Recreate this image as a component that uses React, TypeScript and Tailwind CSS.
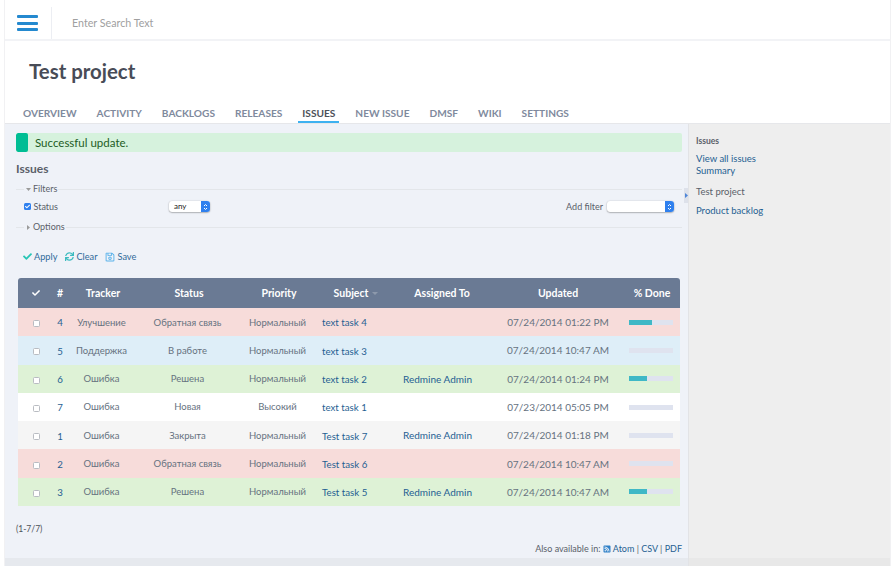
import { FaCheck, FaRegSave, FaRssSquare, FaSync } from 'react-icons/fa';

const rows = [
  { id: 4, tracker: 'Улучшение', status: 'Обратная связь', priority: 'Нормальный', subject: 'text task 4', who: '', updated: '07/24/2014 01:22 PM', done: 'w-[23px]', bg: 'bg-[#f7dcda]' },
  { id: 5, tracker: 'Поддержка', status: 'В работе', priority: 'Нормальный', subject: 'text task 3', who: '', updated: '07/24/2014 10:47 AM', done: 'w-0', bg: 'bg-[#deeef8]' },
  { id: 6, tracker: 'Ошибка', status: 'Решена', priority: 'Нормальный', subject: 'text task 2', who: 'Redmine Admin', updated: '07/24/2014 01:24 PM', done: 'w-[18px]', bg: 'bg-[#def2d6]' },
  { id: 7, tracker: 'Ошибка', status: 'Новая', priority: 'Высокий', subject: 'text task 1', who: '', updated: '07/23/2014 05:05 PM', done: 'w-0', bg: 'bg-white' },
  { id: 1, tracker: 'Ошибка', status: 'Закрыта', priority: 'Нормальный', subject: 'Test task 7', who: 'Redmine Admin', updated: '07/24/2014 01:18 PM', done: 'w-0', bg: 'bg-[#f5f5f5]' },
  { id: 2, tracker: 'Ошибка', status: 'Обратная связь', priority: 'Нормальный', subject: 'Test task 6', who: '', updated: '07/24/2014 10:47 AM', done: 'w-0', bg: 'bg-[#f7dcda]' },
  { id: 3, tracker: 'Ошибка', status: 'Решена', priority: 'Нормальный', subject: 'Test task 5', who: 'Redmine Admin', updated: '07/24/2014 10:47 AM', done: 'w-[18px]', bg: 'bg-[#def2d6]' },
];

const tabs = ['Overview', 'Activity', 'Backlogs', 'Releases', 'Issues', 'New issue', 'DMSF', 'Wiki', 'Settings'];

function MacSelect({ label, className }: { label?: string; className: string }) {
  return (
    <div className={`flex h-[11px] rounded-[3px] bg-white shadow-[0_0.5px_1.5px_rgba(0,0,0,0.45)] overflow-hidden ${className}`}>
      <span className="flex-1 pl-[5px] text-[8px] leading-[11px] text-[#222]">{label}</span>
      <span className="w-[9px] bg-[#2f80ee] flex items-center justify-center">
        <svg width="5" height="8" viewBox="0 0 5 8" fill="none" stroke="#fff" strokeWidth="1">
          <path d="M1 3 L2.5 1.5 L4 3 M1 5 L2.5 6.5 L4 5" />
        </svg>
      </span>
    </div>
  );
}

function FieldLine({ open, label }: { open: boolean; label: string }) {
  return (
    <div className="flex items-center h-[12px] text-[9px] text-[#5a5f69]">
      <span className="w-[8px] h-px bg-[#e3e6ea]" />
      <span className="w-[8px] flex justify-center text-[#9a9a9a]">
        <svg width="5" height="5" viewBox="0 0 5 5" fill="currentColor">
          <path d={open ? 'M0 1 H5 L2.5 4 Z' : 'M1 0 V5 L4 2.5 Z'} />
        </svg>
      </span>
      <span className="px-[1px]">{label}</span>
      <span className="flex-1 h-px bg-[#e3e6ea]" />
    </div>
  );
}

export default function App() {
  return (
    <div className="w-[895px] h-[566px] overflow-hidden bg-white px-[4px] font-['Lato','Liberation_Sans',sans-serif] text-[#66727f]">
      <div className="h-full flex flex-col border-x border-[#f1f1f3]">
        <header className="h-[41px] pt-[7px] flex shrink-0 border-b-2 border-[#f2f3f6]">
          <div className="w-[47px] flex flex-col justify-center gap-[3.5px] pl-[12px] pr-[13px] border-r border-[#eceef3]">
            <span className="h-[3px] bg-[#2489cf] rounded-[1px]" />
            <span className="h-[3px] bg-[#2489cf] rounded-[1px]" />
            <span className="h-[3px] bg-[#2489cf] rounded-[1px]" />
          </div>
          <div className="pl-[20px] flex items-center text-[10.7px] text-[#a0a0a0]">Enter Search Text</div>
        </header>

        <div className="h-[82px] shrink-0 flex flex-col">
          <h1 className="pl-[24px] pt-[18px] h-[59px] text-[20.4px] leading-[25px] font-bold text-[#484c57]">Test project</h1>
          <nav className="flex pl-[18px] gap-[20px] text-[10.15px] font-bold uppercase text-[#7f8a9d]">
            {tabs.map((t) => (
              <span
                key={t}
                className={t === 'Issues' ? 'h-[23px] leading-[14px] pt-[5.5px] text-[#4d5159] border-b-2 border-[#3db1f0] -mx-[4px] px-[4px]' : 'h-[23px] leading-[14px] pt-[5.5px]'}
              >
                {t}
              </span>
            ))}
          </nav>
        </div>

        <div className="flex-1 min-h-0 flex border-t border-[#e6e7ea]">
          <main className="relative w-[683px] shrink-0 bg-[#eff2f8] pl-[11px] pr-[6px] pt-[9px]">
            <div className="flex h-[19px] rounded-[2px] bg-[#d6f2dd] overflow-hidden">
              <span className="w-[12px] bg-[#00bd94] rounded-[2px]" />
              <span className="pl-[7px] text-[11.5px] leading-[19px] text-[#1d5c24]">Successful update.</span>
            </div>
            <h2 className="mt-[9px] h-[18px] text-[12px] leading-[16px] font-bold text-[#5a5f69]">Issues</h2>
            <div className="mt-[4px]"><FieldLine open label="Filters" /></div>
            <div className="h-[23px] flex items-center pl-[8px] text-[9px] text-[#5a5f69]">
              <span className="w-[7px] h-[7px] rounded-[1.5px] bg-[#2f80ee] flex items-center justify-center">
                <FaCheck className="text-white text-[5px]" />
              </span>
              <span className="pl-[2.5px] w-[138px]">Status</span>
              <MacSelect label="any" className="w-[41px]" />
              <span className="ml-auto pr-[4px]">Add filter</span>
              <MacSelect className="w-[67px] mr-[8px]" />
            </div>
            <div className="mt-[3px]"><FieldLine open={false} label="Options" /></div>
            <div className="mt-[12px] h-[24px] pl-[7px] flex items-center gap-[8px] text-[9.2px] text-[#2f6a9a]">
              <span className="flex items-center gap-[2px]"><FaCheck className="text-[#27c5b5] text-[9px]" />Apply</span>
              <span className="flex items-center gap-[2px]"><FaSync className="text-[#3cbcc0] text-[9px]" />Clear</span>
              <span className="flex items-center gap-[2px]"><FaRegSave className="text-[#5ab2ea] text-[10px]" />Save</span>
            </div>

            <table className="mt-[9px] ml-[2px] w-[662px] table-fixed border-collapse text-[9.5px] text-center">
              <colgroup>
                <col className="w-[36px]" />
                <col className="w-[12px]" />
                <col className="w-[74px]" />
                <col className="w-[98px]" />
                <col className="w-[82px]" />
                <col className="w-[72px]" />
                <col className="w-[100px]" />
                <col className="w-[132px]" />
                <col className="w-[56px]" />
              </colgroup>
              <thead>
                <tr className="h-[30px] bg-[#6a7a94] text-white text-[10.5px] font-bold">
                  <th className="rounded-tl-[3px] font-bold pt-[1px]"><FaCheck className="inline text-[8px] -mt-[2px]" /></th>
                  <th className="font-bold pt-[1px]">#</th>
                  <th className="font-bold pt-[1px]">Tracker</th>
                  <th className="font-bold pt-[1px]">Status</th>
                  <th className="font-bold pt-[1px]">Priority</th>
                  <th className="font-bold pt-[1px]">
                    Subject
                    <svg className="inline ml-[4px] mb-[1px]" width="6" height="3" viewBox="0 0 6 3" fill="#8d99ac"><path d="M0 0 H6 L3 3 Z" /></svg>
                  </th>
                  <th className="font-bold pt-[1px]">Assigned To</th>
                  <th className="font-bold pt-[1px]">Updated</th>
                  <th className="rounded-tr-[3px] font-bold pt-[1px]">% Done</th>
                </tr>
              </thead>
              <tbody>
                {rows.map((r) => (
                  <tr key={r.id} className={`h-[28.3px] ${r.bg}`}>
                    <td className="pt-[2px]">
                      <span className="inline-block align-middle w-[7px] h-[7px] rounded-[1.5px] bg-white border border-[#b9bcc2]" />
                    </td>
                    <td className="pt-[1px] text-[#1f5f92] text-[9.7px]">{r.id}</td>
                    <td className="pt-[1px] pr-[3px]">{r.tracker}</td>
                    <td className="pt-[1px] pr-[3px]">{r.status}</td>
                    <td className="pt-[1px] pr-[3px]">{r.priority}</td>
                    <td className="pt-[1px] text-left pl-[2px] text-[#1f5f92] text-[9.7px]">{r.subject}</td>
                    <td className="pt-[1px] text-left pl-[11px] text-[#1f5f92] text-[10px]">{r.who}</td>
                    <td className="pt-[1px] text-[10px]">{r.updated}</td>
                    <td className="pl-[5px] pr-[7px]">
                      <div className="h-[5px] bg-[#dfe3ef]">
                        <div className={`h-full bg-[#3fb8c6] ${r.done}`} />
                      </div>
                    </td>
                  </tr>
                ))}
              </tbody>
            </table>

            <p className="mt-[17px] text-[8.5px] leading-[12px] text-[#4d5159]">(1-7/7)</p>
            <p className="mt-[8px] text-right text-[9px] leading-[12px] text-[#5a5f69]">
              Also available in: <FaRssSquare className="inline text-[8px] text-[#2f80c8] -mt-[1px]" />{' '}
              <span className="text-[#1f5f92]">Atom</span> | <span className="text-[#1f5f92]">CSV</span> | <span className="text-[#1f5f92]">PDF</span>
            </p>

            <span className="absolute -right-[1px] top-[64px] w-[5px] h-[15px] bg-[#dde1ea] flex items-center justify-center">
              <svg width="3" height="5" viewBox="0 0 3 5" fill="#4f86d8"><path d="M0 0 L3 2.5 L0 5 Z" /></svg>
            </span>
            <div className="absolute inset-x-0 bottom-0 h-[8px] bg-[#e6e9ee]" />
          </main>

          <aside className="relative flex-1 bg-[#eeeeee] border-l border-[#e2e3e6] pl-[7px] pt-[11px] text-[9.5px] text-[#1f5f92]">
            <h3 className="text-[8.5px] leading-[12px] font-bold text-[#5a5f69]">Issues</h3>
            <p className="mt-[6px] leading-[12px]">View all issues</p>
            <p className="leading-[12px]">Summary</p>
            <p className="mt-[9px] leading-[12px] text-[#5a5f69]">Test project</p>
            <p className="mt-[7px] leading-[12px]">Product backlog</p>
            <div className="absolute inset-x-0 bottom-0 h-[8px] bg-[#e8e8e8]" />
          </aside>
        </div>
      </div>
    </div>
  );
}
